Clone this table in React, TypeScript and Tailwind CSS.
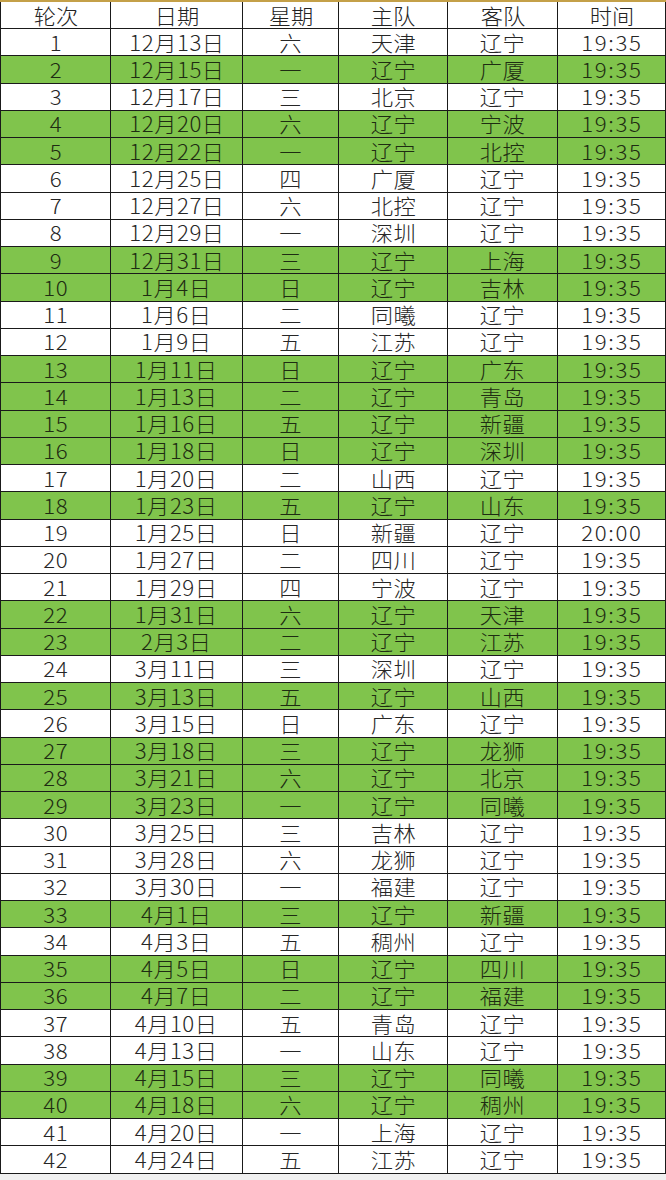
import React from 'react';

type Game = [number, string, string, string, string, string];

const games: Game[] = [
  [1, '12月13日', '六', '天津', '辽宁', '19:35'],
  [2, '12月15日', '一', '辽宁', '广厦', '19:35'],
  [3, '12月17日', '三', '北京', '辽宁', '19:35'],
  [4, '12月20日', '六', '辽宁', '宁波', '19:35'],
  [5, '12月22日', '一', '辽宁', '北控', '19:35'],
  [6, '12月25日', '四', '广厦', '辽宁', '19:35'],
  [7, '12月27日', '六', '北控', '辽宁', '19:35'],
  [8, '12月29日', '一', '深圳', '辽宁', '19:35'],
  [9, '12月31日', '三', '辽宁', '上海', '19:35'],
  [10, '1月4日', '日', '辽宁', '吉林', '19:35'],
  [11, '1月6日', '二', '同曦', '辽宁', '19:35'],
  [12, '1月9日', '五', '江苏', '辽宁', '19:35'],
  [13, '1月11日', '日', '辽宁', '广东', '19:35'],
  [14, '1月13日', '二', '辽宁', '青岛', '19:35'],
  [15, '1月16日', '五', '辽宁', '新疆', '19:35'],
  [16, '1月18日', '日', '辽宁', '深圳', '19:35'],
  [17, '1月20日', '二', '山西', '辽宁', '19:35'],
  [18, '1月23日', '五', '辽宁', '山东', '19:35'],
  [19, '1月25日', '日', '新疆', '辽宁', '20:00'],
  [20, '1月27日', '二', '四川', '辽宁', '19:35'],
  [21, '1月29日', '四', '宁波', '辽宁', '19:35'],
  [22, '1月31日', '六', '辽宁', '天津', '19:35'],
  [23, '2月3日', '二', '辽宁', '江苏', '19:35'],
  [24, '3月11日', '三', '深圳', '辽宁', '19:35'],
  [25, '3月13日', '五', '辽宁', '山西', '19:35'],
  [26, '3月15日', '日', '广东', '辽宁', '19:35'],
  [27, '3月18日', '三', '辽宁', '龙狮', '19:35'],
  [28, '3月21日', '六', '辽宁', '北京', '19:35'],
  [29, '3月23日', '一', '辽宁', '同曦', '19:35'],
  [30, '3月25日', '三', '吉林', '辽宁', '19:35'],
  [31, '3月28日', '六', '龙狮', '辽宁', '19:35'],
  [32, '3月30日', '一', '福建', '辽宁', '19:35'],
  [33, '4月1日', '三', '辽宁', '新疆', '19:35'],
  [34, '4月3日', '五', '稠州', '辽宁', '19:35'],
  [35, '4月5日', '日', '辽宁', '四川', '19:35'],
  [36, '4月7日', '二', '辽宁', '福建', '19:35'],
  [37, '4月10日', '五', '青岛', '辽宁', '19:35'],
  [38, '4月13日', '一', '山东', '辽宁', '19:35'],
  [39, '4月15日', '三', '辽宁', '同曦', '19:35'],
  [40, '4月18日', '六', '辽宁', '稠州', '19:35'],
  [41, '4月20日', '一', '上海', '辽宁', '19:35'],
  [42, '4月24日', '五', '江苏', '辽宁', '19:35'],
];

const headers = ['轮次', '日期', '星期', '主队', '客队', '时间'];

const grid = 'grid grid-cols-[110px_132px_96px_109px_110px_108px]';
const cell =
  'flex items-center justify-center border-r border-b border-[#1a1a1a] leading-none text-[21px] font-light tabular-nums';

export default function App() {
  return (
    <div
      className="w-[666px] h-[1180px] bg-[#f0f0f0] overflow-hidden"
      style={{ fontFamily: '"Noto Sans CJK SC", sans-serif' }}
    >
      <div className="h-[2px] bg-[#c4a048]" />
      <div className="border-l border-[#1a1a1a] w-[666px]">
        <div className={`${grid} h-[27px] bg-white text-[#222]`}>
          {headers.map((h) => (
            <div key={h} className={cell}>
              <span className="inline-block scale-x-[1.06]">{h}</span>
            </div>
          ))}
        </div>
        {games.map((g) => {
          const home = g[3] === '辽宁';
          return (
            <div
              key={g[0]}
              className={`${grid} h-[27.25px] ${home ? 'bg-[#80c44c] text-[#1e2c12]' : 'bg-white text-[#262626]'}`}
            >
              {g.map((v, i) => (
                <div key={i} className={cell}>
                  <span
                    className={`inline-block scale-x-[1.06] ${i === 5 ? 'tracking-[1.5px]' : 'tracking-[0.5px]'}`}
                  >
                    {v}
                  </span>
                </div>
              ))}
            </div>
          );
        })}
      </div>
    </div>
  );
}
